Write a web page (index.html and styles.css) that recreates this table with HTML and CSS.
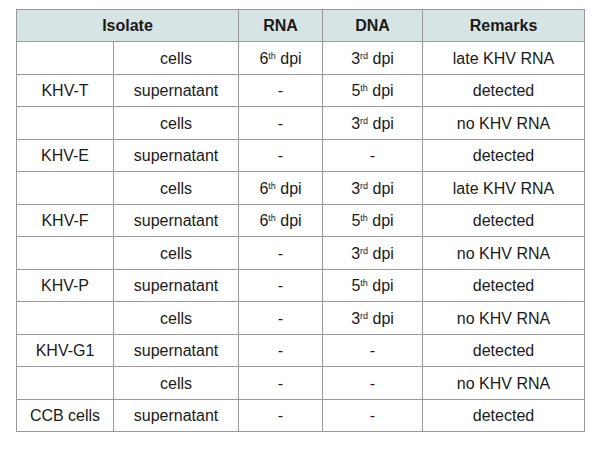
FILE: index.html
```html
<!DOCTYPE html>
<html>
<head>
<meta charset="utf-8">
<link rel="stylesheet" href="styles.css">
</head>
<body>
<div class="wrap">
<table class="tbl">
  <colgroup>
    <col class="c1"><col class="c2"><col class="c3"><col class="c4"><col class="c5">
  </colgroup>
  <thead>
    <tr><th colspan="2">Isolate</th><th>RNA</th><th>DNA</th><th>Remarks</th></tr>
  </thead>
  <tbody>
    <tr><td></td><td>cells</td><td>6<sup>th</sup> dpi</td><td>3<sup>rd</sup> dpi</td><td>late KHV RNA</td></tr>
    <tr><td>KHV-T</td><td>supernatant</td><td>-</td><td>5<sup>th</sup> dpi</td><td>detected</td></tr>
    <tr><td></td><td>cells</td><td>-</td><td>3<sup>rd</sup> dpi</td><td>no KHV RNA</td></tr>
    <tr><td>KHV-E</td><td>supernatant</td><td>-</td><td>-</td><td>detected</td></tr>
    <tr><td></td><td>cells</td><td>6<sup>th</sup> dpi</td><td>3<sup>rd</sup> dpi</td><td>late KHV RNA</td></tr>
    <tr><td>KHV-F</td><td>supernatant</td><td>6<sup>th</sup> dpi</td><td>5<sup>th</sup> dpi</td><td>detected</td></tr>
    <tr><td></td><td>cells</td><td>-</td><td>3<sup>rd</sup> dpi</td><td>no KHV RNA</td></tr>
    <tr><td>KHV-P</td><td>supernatant</td><td>-</td><td>5<sup>th</sup> dpi</td><td>detected</td></tr>
    <tr><td></td><td>cells</td><td>-</td><td>3<sup>rd</sup> dpi</td><td>no KHV RNA</td></tr>
    <tr><td>KHV-G1</td><td>supernatant</td><td>-</td><td>-</td><td>detected</td></tr>
    <tr><td></td><td>cells</td><td>-</td><td>-</td><td>no KHV RNA</td></tr>
    <tr><td>CCB cells</td><td>supernatant</td><td>-</td><td>-</td><td>detected</td></tr>
  </tbody>
</table>
</div>
</body>
</html>
```
FILE: styles.css
```css
html, body {
  margin: 0;
  padding: 0;
  background: #ffffff;
}
.wrap {
  padding: 9px 0 0 16px;
}
.tbl {
  border-collapse: collapse;
  table-layout: fixed;
  width: 568px;
  font-family: "Liberation Sans", Arial, sans-serif;
  font-size: 16px;
  color: #1a1a1a;
}
.c1 { width: 97px; }
.c2 { width: 125px; }
.c3 { width: 84px; }
.c4 { width: 100px; }
.c5 { width: 162px; }
.tbl th, .tbl td {
  border: 1px solid #9a9a9a;
  text-align: center;
  vertical-align: middle;
  padding: 2px 0 0 0;
  height: 29.5px;
  line-height: 18px;
}
.tbl th {
  background: #d6e4e4;
  font-weight: bold;
  padding: 0;
  height: 31px;
}
.tbl sup {
  font-size: 9px;
  line-height: 0;
  vertical-align: 5px;
}
```
